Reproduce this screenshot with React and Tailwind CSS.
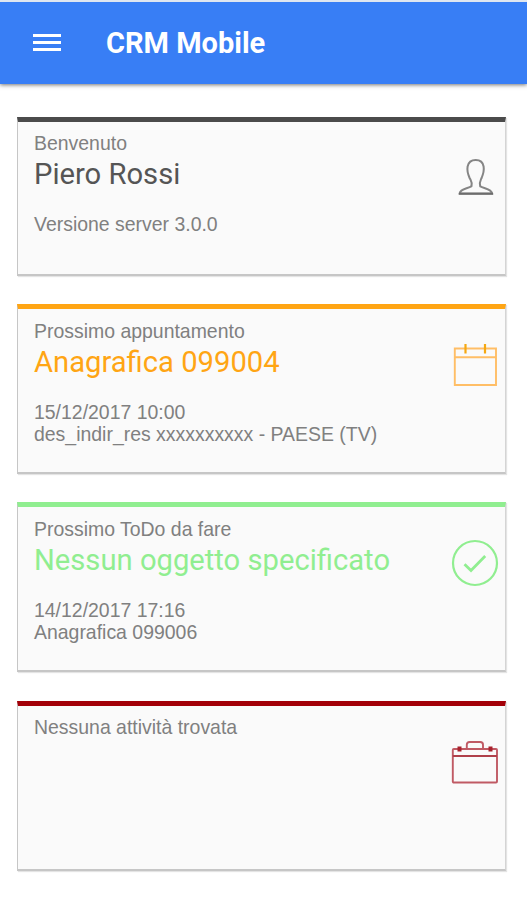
/**
 * CRM Mobile: home dashboard.
 * Top bar with menu button, then one card per section.
 */

const UserIcon = () => (
  <svg width="36" height="38" viewBox="0 0 36 38" fill="none" stroke="#858585" strokeWidth="2">
    <path d="M13.5 28.5C14.6 24 13 23 11.4 19.5C9.7 15.5 9 12 9.6 8.5C10.5 4 13.5 2 17.7 2C21.9 2 24.9 4 25.6 8.5C26.2 12 25.4 15.5 23.8 19.5C22.2 23 21 24 22.2 28.5" />
    <path d="M13.8 28.2C9 31 2.5 30.5 1.5 35.6H34.2C33 30.5 26.5 31 21.8 28.2" />
    <path d="M1 35.8H35" stroke="#6c6c6c" />
  </svg>
);

const CalendarIcon = () => (
  <svg width="44" height="44" viewBox="0 0 44 44" fill="none" stroke="#ffbe66" strokeWidth="1.9">
    <path d="M1.8 5.5H43V42H1.8ZM1.8 14.2H43" />
    <path d="M12.5 1V10.5M32 1V10.5" stroke="#f5a811" strokeWidth="2.2" />
  </svg>
);

const CheckIcon = () => (
  <svg width="48" height="48" viewBox="0 0 48 48" fill="none" stroke="#90ee90">
    <circle cx="24" cy="24" r="22" strokeWidth="2.2" />
    <path d="M13.5 25.2L20 31.5L34.2 17" strokeWidth="2.8" />
  </svg>
);

const BriefcaseIcon = () => (
  <svg width="48" height="44" viewBox="0 0 48 44" fill="none" stroke="#c05a64" strokeWidth="1.9">
    <rect x="1.8" y="9" width="44.2" height="33.5" rx="1" />
    <path d="M1.8 16H46" stroke="#b0404a" />
    <path d="M15.8 9V4.8Q15.8 2 18.6 2H29.2Q32 2 32 4.8V9" />
    <path d="M8.5 6.5V11.5M39.5 6.5V11.5" stroke="#a8222d" strokeWidth="4" />
  </svg>
);

const CARDS = [
  {
    id: "user",
    label: "Benvenuto",
    title: "Piero Rossi",
    lines: ["Versione server 3.0.0"],
    frame: "h-[159px] pt-[10px] border-t-[#4b4b4b]",
    color: "text-[#555555]",
    icon: <UserIcon />,
    iconPos: "top-[36px] right-[11px]",
  },
  {
    id: "appointment",
    label: "Prossimo appuntamento",
    title: "Anagrafica 099004",
    lines: ["15/12/2017 10:00", "des_indir_res xxxxxxxxxx - PAESE (TV)"],
    frame: "h-[170px] mt-7 pt-[11px] border-t-[#ffa514]",
    color: "text-[#ffa514]",
    icon: <CalendarIcon />,
    iconPos: "top-[34px] right-[8px]",
  },
  {
    id: "todo",
    label: "Prossimo ToDo da fare",
    title: "Nessun oggetto specificato",
    lines: ["14/12/2017 17:16", "Anagrafica 099006"],
    frame: "h-[170px] mt-7 pt-[11px] border-t-[#90ee90]",
    color: "text-[#90ee90]",
    icon: <CheckIcon />,
    iconPos: "top-[32px] right-[6px]",
  },
  {
    id: "activity",
    label: "Nessuna attività trovata",
    title: null,
    lines: [],
    frame: "h-[170px] mt-[29px] pt-[10px] border-t-[#a30008]",
    color: "text-[#a30008]",
    icon: <BriefcaseIcon />,
    iconPos: "top-[34px] right-[6px]",
  },
];

function Card({ label, title, lines, frame, color, icon, iconPos }) {
  return (
    <section className={`relative border border-t-[5px] border-b-2 border-[#c6c6c6] border-r-[#d4d4d4] bg-[#fafafa] pl-4 shadow-[1px_1px_1px_#e4e4e4] ${frame}`}>
      <p>{label}</p>
      {title && <h2 className={`font-['Roboto',sans-serif] text-[29.2px] leading-[40px] ${color}`}>{title}</h2>}
      <div className="mt-[19px]">
        {lines.map((line) => (
          <p key={line}>{line}</p>
        ))}
      </div>
      <div className={`absolute ${iconPos}`}>{icon}</div>
    </section>
  );
}

export default function App() {
  return (
    <div className="h-[900px] overflow-hidden bg-white font-['Liberation_Sans',Arial,sans-serif]">
      <header className="flex h-[84px] items-center border-t-2 border-t-[#dfe6f0] bg-[#387ef5] pl-[33px] shadow-[0_1px_4px_rgba(0,0,0,0.55)]">
        <button className="mb-px flex w-7 flex-col gap-1" aria-label="Menu">
          <span className="h-[3px] bg-white" />
          <span className="h-[3px] bg-white" />
          <span className="h-[3px] bg-white" />
        </button>
        <h1 className="ml-[45px] font-['Roboto',sans-serif] text-[29px] font-bold leading-none text-white">CRM Mobile</h1>
      </header>

      <main className="pl-[17px] pr-[21px] pt-[33px] text-[19.45px] leading-[22px] text-[#808080]">
        {CARDS.map((card) => (
          <Card key={card.id} {...card} />
        ))}
      </main>
    </div>
  );
}
